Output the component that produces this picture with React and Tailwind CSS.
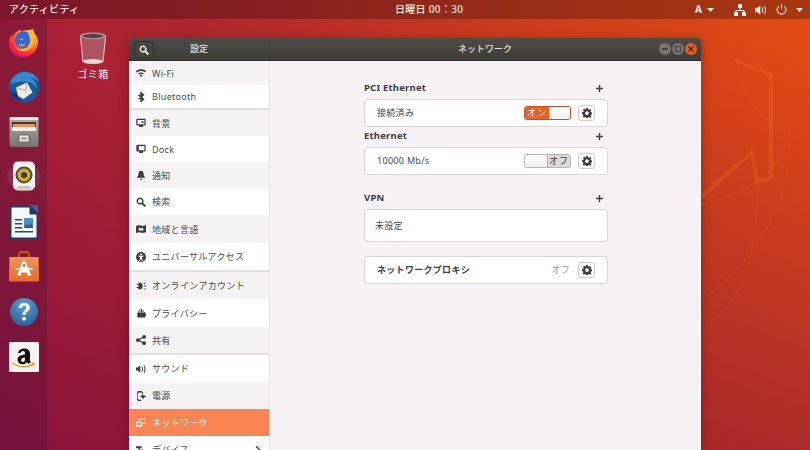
import React from "react";

const F = { fontFamily: '"Noto Sans","Noto Sans CJK JP",sans-serif' };

function Gear() {
  return (
    <svg width="10" height="10" viewBox="0 0 16 16" fill="#3d3d3d">
      <path fillRule="evenodd" d="M6.6 0h2.8l.4 2.2 1.3.6 1.9-1.3 2 2-1.3 1.9.6 1.3 2.2.4v2.8l-2.2.4-.6 1.3 1.3 1.9-2 2-1.9-1.3-1.3.6-.4 2.2H6.6l-.4-2.2-1.3-.6-1.9 1.3-2-2 1.3-1.9-.6-1.3L0 9.4V6.6l2.2-.4.6-1.3L1.500 3l2-2 1.900 1.300 1.300-.6zM8 5a3 3 0 100 6 3 3 0 000-6z" />
    </svg>
  );
}

function GearBtn({ tint }) {
  return (
    <div className={`w-[17px] h-[16px] rounded-[3px] border flex items-center justify-center bg-[#fbfafa] ${tint ? "border-[#edc9b5]" : "border-[#cfcbc8]"}`}>
      <Gear />
    </div>
  );
}

function Plus() {
  return (
    <svg width="7" height="7" viewBox="0 0 7 7" fill="#3d3d3d"><path d="M2.800 0h1.400v2.800H7v1.400H4.200V7H2.800V4.200H0V2.800h2.800z" /></svg>
  );
}

function SectionHead({ title, cls }) {
  return (
    <div className={`flex items-center justify-between pr-[5px] ${cls}`}>
      <span className="text-[9.5px] font-bold text-[#3d3d3d] leading-[12px] tracking-[0.2px]">{title}</span>
      <Plus />
    </div>
  );
}

function Row({ cls, children }) {
  return (
    <div className={`rounded-[3px] border border-[#dcd7d6] bg-white flex items-center ${cls}`}>{children}</div>
  );
}

function SideIcon({ name, color = "#3d3d3d" }) {
  const p = { width: 10, height: 10, viewBox: "0 0 16 16", fill: color };
  switch (name) {
    case "wifi":
      return <svg {...p}><path d="M0 5C4 1 12 1 16 5l-1.800 2C10.500 4 5.500 4 1.800 7z" /><path d="M3.500 8.500c2.700-2 6.300-2 9 0L11 10.200c-1.800-1.200-4.200-1.200-6 0z" /><path d="M6 11.500c1.200-.7 2.800-.7 4 0L8 15z" /></svg>;
    case "bt":
      return <svg {...p} fill="none" stroke={color} strokeWidth="2.400"><path d="M4 4.500l8 7-4 3.500V1l4 3.500-8 7" /></svg>;
    case "bg":
      return <svg {...p}><path fillRule="evenodd" d="M2 1h12a1.500 1.500 0 011.500 1.500v8A1.500 1.500 0 0114 12h-3v2.500H5V12H2a1.500 1.500 0 01-1.500-1.500v-8A1.500 1.500 0 012 1zm.500 2v7h11V3zM9 5h3v3H9z" /></svg>;
    case "dock":
      return <svg {...p}><path fillRule="evenodd" d="M2 1h12a1.500 1.500 0 011.500 1.500v8A1.500 1.500 0 0114 12h-3v2.500H5V12H2a1.500 1.500 0 01-1.500-1.500v-8A1.500 1.500 0 012 1zm2.500 2v7h9V3z" /></svg>;
    case "bell":
      return <svg {...p}><path d="M8 1c2.500 0 4 2 4 4.500 0 3 1 4.500 2.500 6v1h-13v-1C3 10 4 8.500 4 5.500 4 3 5.500 1 8 1zM6 14h4a2 2 0 01-4 0z" /></svg>;
    case "search":
      return <svg {...p} fill="none" stroke={color} strokeWidth="2.400"><circle cx="6.500" cy="6.500" r="4.500" /><path d="M10 10l5 5" strokeWidth="3" /></svg>;
    case "region":
      return <svg {...p}><path fillRule="evenodd" d="M0 3l5-1.500L11 3l5-1.500V13l-5 1.500L5 13l-5 1.500zM5 5l2 2 3-1 2 2-1 3-3-1-2 1-2-3z" /></svg>;
    case "access":
      return <svg {...p}><path fillRule="evenodd" d="M8 0a8 8 0 110 16A8 8 0 018 0zm0 2.500a1.500 1.500 0 100 3 1.500 1.500 0 000-3zM3.500 5.500v1.300L6.500 8v2L5 14l1.300.4L8 10.500l1.700 3.900L11 14l-1.500-4V8l3-1.200V5.500L8 6.500z" /></svg>;
    case "online":
      return <svg {...p}><path d="M4 2l5 1.500c2 .8 2 8.200 0 9L4 14V11H1V9.500h3v-3H1V5h3z" /><path d="M12 4l3-2 .6 1-3 2zM12.500 7.300h3.500v1.400h-3.500zM12 12l3 2 .6-1-3-2z" /></svg>;
    case "privacy":
      return <svg {...p}><path d="M2 8h1V5h1.500v3h1V2H7v6h1V1h1.500v7h1V3H12v5l2-1.500 1.500 1V13a2 2 0 01-2 2h-10A1.500 1.500 0 012 13.500z" /></svg>;
    case "share":
      return <svg {...p}><circle cx="3" cy="8" r="3" /><circle cx="13" cy="3" r="3" /><circle cx="13" cy="13" r="3" /><path d="M3 7L12.500 2l.7 1.500L4 9z" /><path d="M3 9l9.500 5 .7-1.500L4 7z" /></svg>;
    case "sound":
      return <svg {...p}><path d="M0 5.500h2.500L7 2v12l-4.500-3.500H0z" /><path d="M9 4.500l1.300-.7c1.500 2.700 1.500 5.700 0 8.400L9 11.500c1.100-2.300 1.100-4.700 0-7z" /><path d="M12.300 2.500l1.300-.7c2.200 4 2.200 8.400 0 12.400l-1.300-.7c1.800-3.500 1.800-7.500 0-11z" /></svg>;
    case "power":
      return <svg {...p}><path fillRule="evenodd" d="M5 0h4l1 2h1.500v2H9V2.200H5L3.200 3.500v9L5 14h3v2H4a2 2 0 01-2-2V2a2 2 0 012-2z" /><path d="M10 5h1.500v2H14l1.500 1.500v1H14l-2 3h-1L9 10l-2-.5v-1L9 7z" /></svg>;
    case "network":
      return <svg {...p}><path fillRule="evenodd" d="M6 1h8.500A1.500 1.500 0 0116 2.500v5A1.500 1.500 0 0114.500 9H11V7.500h3.500v-5H6V5H4.500V2.500A1.500 1.500 0 016 1zM1.500 6H8.500A1.500 1.500 0 0110 7.500v5A1.500 1.500 0 018.500 14h-7A1.500 1.500 0 010 12.500v-5A1.500 1.500 0 011.500 6zm.500 2v3h6V8z" /></svg>;
    case "device":
      return <svg {...p}><path d="M0 2h9v3H6v2h5v3H8v4H2v-4h2V5H0z" /><circle cx="13" cy="11" r="2.500" /></svg>;
    default:
      return null;
  }
}

function Item({ icon, label, h, alt, active, last }) {
  const bg = active ? "bg-[#fb8454]" : alt ? "bg-[#f5f3f3]" : "bg-white";
  const txt = active ? "text-white" : "text-[#4a4a4a]";
  return (
    <div className={`${h} ${bg} flex items-center shrink-0 pl-[4px] pr-[8px]`}>
      <span className="w-[16px] flex justify-center"><SideIcon name={icon} color={active ? "#ffffff" : "#3d3d3d"} /></span>
      <span className={`ml-[3px] text-[9px] leading-none tracking-[0.3px] flex-1 ${txt}`}>{label}</span>
      {last && (
        <svg width="6" height="8" viewBox="0 0 6 8" fill="none" stroke="#3d3d3d" strokeWidth="1.300"><path d="M1 0.500l4 3.500-4 3.500" /></svg>
      )}
    </div>
  );
}

const Sep = () => <div className="h-[2px] shrink-0 bg-[#e3e0df]" />;

function Toggle({ on }) {
  if (on) {
    return (
      <div className="w-[47px] h-[14px] rounded-[3px] border border-[#b8532a] bg-[#f1f0ef] flex overflow-hidden">
        <div className="w-[24px] bg-[#ed5f26] text-white text-[9px] leading-[12px] text-center tracking-[1px]">オン</div>
        <div className="flex-1 bg-gradient-to-b from-white to-[#f1efee]" />
      </div>
    );
  }
  return (
    <div className="w-[47px] h-[14px] rounded-[3px] border border-[#b9b5b2] bg-[#dcdad8] flex overflow-hidden">
      <div className="w-[23px] bg-gradient-to-b from-white to-[#f1efee] border-r border-[#b9b5b2]" />
      <div className="flex-1 text-[#3d3d3d] text-[9px] leading-[12px] text-center tracking-[1px]">オフ</div>
    </div>
  );
}

function DockIcon({ children }) {
  return <div className="h-[44.900px] flex items-center justify-center shrink-0">{children}</div>;
}

const Firefox = () => (
  <svg width="31" height="31" viewBox="0 0 32 32">
    <defs>
      <radialGradient id="ff1" cx="70%" cy="20%" r="90%"><stop offset="0" stopColor="#ffdf3d" /><stop offset=".45" stopColor="#ff8a1f" /><stop offset=".8" stopColor="#f5243f" /><stop offset="1" stopColor="#d91a7a" /></radialGradient>
    </defs>
    <path d="M26 2c1 2 .8 3.500 1.200 4.300C30 9.500 31.500 13 31 17c-.8 8-7.300 14-15 14C7.500 31 1 24.500 1 16.500 1 13 2 9.500 3.500 7.500 4 9 4.500 9.500 5 10c1.500-3.500 4.500-6.500 9-7.500-1 1-1.500 2-1.500 2.500C16 3 23 3.500 26 2z" fill="url(#ff1)" />
    <circle cx="16" cy="13.500" r="9" fill="#3468d6" />
    <path d="M11 17c2 1.300 5 1.300 7-.2-.5 2.500-3 3.700-5 3.200-1-.3-1.700-1.500-2-3z" fill="#ff9a1f" />
    <path d="M12.500 12.500c1.500-.6 3.500-.4 4 .8-1.300-.2-2.700.2-4 .4z" fill="#ff9a1f" />
    <path d="M21 3c4 3 7 8 5.500 14-1 4-5.500 8-10.500 8-3.500 0-7-1.800-8.500-5.500 3 3.500 8.500 4.500 12 1.500 3.500-3 4-7.500 2.500-11C21.500 8 20.500 6 21 3z" fill="#ffb81f" />
  </svg>
);

const Thunderbird = () => (
  <svg width="32" height="32" viewBox="0 0 32 32">
    <circle cx="16" cy="16" r="15.500" fill="#1c5a9c" />
    <path d="M2 13C4 6 10 1 17 1c6 0 12 3.500 14 10-3-3-6-4.500-9-4.500 4 2 6.500 6 7 11-3-5-8-7.500-14-7-5 .4-9 1-13 2.500z" fill="#3a8ad0" />
    <path d="M8 16.500l11-5 5.500 10-9 6.500-5.500-3z" fill="#eeece8" />
    <path d="M8 16.500l9.500 3 1.500-8" fill="none" stroke="#aaa7a0" strokeWidth="1" />
    <path d="M1 18c1.500 7 7.500 12.500 15 13-4-2.500-6.500-5.500-7.500-9-3.500 0-5.500-1.500-7.500-4z" fill="#123a6c" />
  </svg>
);

const Files = () => (
  <svg width="30" height="32" viewBox="0 0 30 32">
    <defs><linearGradient id="fl" x1="0" y1="0" x2="0" y2="1"><stop offset="0" stopColor="#b3b0ac" /><stop offset="1" stopColor="#76736f" /></linearGradient></defs>
    <rect x="0.500" y="1" width="29" height="30" rx="2" fill="url(#fl)" />
    <rect x="0.500" y="1" width="29" height="3" rx="1.500" fill="#efedea" />
    <rect x="3" y="6" width="24" height="9" fill="#3c3936" />
    <rect x="4" y="8" width="22" height="4" fill="#ef9257" />
    <rect x="3" y="11" width="24" height="4" fill="#f4f2ee" />
    <rect x="10" y="19" width="10" height="7" rx="1" fill="#e7e5e1" stroke="#5f5c58" strokeWidth="0.800" />
    <rect x="12.500" y="21.500" width="5" height="2" fill="#8e8b87" />
  </svg>
);

const Rhythmbox = () => (
  <svg width="36" height="32" viewBox="0 0 36 32">
    <ellipse cx="18" cy="16" rx="17" ry="13" fill="#8f6a96" opacity=".25" />
    <rect x="7" y="0.500" width="22" height="29" rx="5" fill="#f4f3ef" />
    <circle cx="18" cy="14" r="8.500" fill="#4a4a42" />
    <circle cx="18" cy="14" r="6.500" fill="#d3ad1c" />
    <circle cx="18" cy="14" r="3" fill="#3a392f" />
    <rect x="11" y="25" width="14" height="3.500" rx="1.500" fill="#c8c7c2" />
  </svg>
);

const Writer = () => (
  <svg width="28" height="34" viewBox="0 0 28 34">
    <path d="M0 1h20l8 8v25H0z" fill="#103f6e" />
    <path d="M1.500 2.500h18v7h7V32.500H1.500z" fill="#f5f8fb" />
    <path d="M20 0l8 0 0 8z" fill="#2a6aa8" />
    <rect x="5" y="14" width="7" height="1.500" fill="#16507f" /><rect x="5" y="18" width="7" height="1.500" fill="#16507f" /><rect x="5" y="22" width="7" height="1.500" fill="#16507f" /><rect x="5" y="26" width="18" height="1.500" fill="#16507f" />
    <rect x="14" y="13" width="9" height="10" fill="#4a90c7" />
    <path d="M14 23l3-4 2 2 2-3 2 5z" fill="#2b5d8a" />
  </svg>
);

const Store = () => (
  <svg width="30" height="31" viewBox="0 0 30 31">
    <defs><linearGradient id="st" x1="0" y1="0" x2="0" y2="1"><stop offset="0" stopColor="#f69356" /><stop offset="1" stopColor="#ea6a2a" /></linearGradient></defs>
    <path d="M10 7V4a3 3 0 013-3h4a3 3 0 013 3v3" fill="none" stroke="#c9521c" strokeWidth="1.800" />
    <path d="M0.500 6h29L30 30.500H0z" fill="url(#st)" />
    <path d="M13.500 10h3l6 15h-3.500l-1.200-3.500h-5.600L11.500 25H8z" fill="#fff" />
    <rect x="6" y="17" width="18" height="1.500" fill="#fff" />
    <rect x="14" y="13" width="2" height="3" fill="#ea6a2a" />
  </svg>
);

const Help = () => (
  <svg width="28" height="28" viewBox="0 0 28 28">
    <defs><radialGradient id="hp" cx="50%" cy="25%" r="85%"><stop offset="0" stopColor="#5aa1d8" /><stop offset="1" stopColor="#22598f" /></radialGradient></defs>
    <circle cx="14" cy="14" r="14" fill="url(#hp)" />
    <path d="M8.500 10c0-3 2.500-5 5.700-5 3.300 0 5.500 2 5.500 4.800 0 3.800-4.200 3.800-4.200 7.200h-3c0-4.800 4-4.700 4-7.200 0-1.200-1-2-2.300-2-1.500 0-2.600 1-2.700 2.400z" fill="#fff" />
    <rect x="12.300" y="19" width="3.400" height="3.400" rx="1" fill="#fff" />
  </svg>
);

const Amazon = () => (
  <svg width="30" height="30" viewBox="0 0 30 30">
    <rect width="30" height="30" rx="1.500" fill="#f4f3f1" />
    <path fillRule="evenodd" d="M9 11c.5-3 3-4.500 6-4.500 3.500 0 6 1.500 6 5V18c0 1 .5 1.500 1 2l-2.500 2c-.7-.5-1.200-1.200-1.500-2-1 1.500-2.500 2.300-4.500 2.300-3 0-5-1.800-5-4.500 0-3.500 3-5 7.500-5.300v-1c0-1.500-.5-2.500-2-2.500-1.300 0-2 .7-2.300 2zm7 4.500c-2.500.2-3.800 1-3.800 2.500 0 1.200.7 2 1.800 2 1.300 0 2-1.300 2-3z" fill="#111" />
    <path d="M3 21c6 4 14 5 21 1.500" fill="none" stroke="#f59a1f" strokeWidth="1.500" />
    <path d="M22 21l4-.5-.8 3.500z" fill="#f59a1f" />
  </svg>
);

const Trash = () => (
  <svg width="28" height="33" viewBox="0 0 28 33">
    <ellipse cx="14" cy="4" rx="13" ry="3.500" fill="#a99fa0" />
    <ellipse cx="14" cy="4" rx="10.500" ry="2.200" fill="#5a4148" />
    <path d="M1.500 5l2.500 25c1 3 19 3 20 0L26.500 5C22 8 6 8 1.500 5z" fill="#b2606c" opacity=".8" />
    <ellipse cx="14" cy="29.500" rx="10" ry="2.500" fill="#e0dad8" />
    <path d="M1.500 5l2.500 25" stroke="#e0d5d5" strokeWidth="1" fill="none" />
    <path d="M26.500 5l-2.500 25" stroke="#e0d5d5" strokeWidth="1" fill="none" />
  </svg>
);

export default function App() {
  return (
    <div
      style={F}
      className="relative w-[810px] h-[450px] overflow-hidden flex flex-col bg-[linear-gradient(100deg,#a81d38_0%,#b42a2c_30%,#c93a1e_55%,#e84f12_100%)]"
    >
      <div className="absolute inset-0 bg-[linear-gradient(to_bottom,rgba(100,0,70,0)_8%,rgba(100,0,70,0.45)_100%)]" />
      <svg className="absolute inset-0" width="810" height="450" viewBox="0 0 810 450" fill="none">
        <path d="M700 198L752 152L757 182L771 178L771 75L735 60" stroke="#ee6a22" strokeOpacity=".3" strokeWidth="4" />
        <path d="M700 205C740 195 780 180 790 130M737 62C745 110 770 125 790 130M790 130C795 200 750 270 700 300M757 180C760 260 735 310 705 325" stroke="#f07030" strokeOpacity=".15" strokeWidth="1" />
      </svg>
      <div className="relative h-[19px] shrink-0 bg-black/25 flex items-center text-white">
        <span className="ml-[9px] text-[10px] font-medium tracking-[0.3px] text-[#f4e9e6]">アクティビティ</span>
        <span className="absolute left-[395px] text-[10px] font-medium tracking-[0.3px] text-[#f4e9e6]">日曜日 00：30</span>
        <div className="ml-auto flex items-center mr-[7px]">
          <span className="text-[10px] font-bold text-[#eef0f8]">A</span>
          <svg className="ml-[5px]" width="7" height="4" viewBox="0 0 7 4" fill="#f4e9e6"><path d="M0 0h7L3.500 4z" /></svg>
          <svg className="ml-[20px]" width="12" height="12" viewBox="0 0 12 12" fill="#f4e9e6"><rect x="4" y="0" width="4" height="4" /><rect x="0" y="8" width="4" height="4" /><rect x="8" y="8" width="4" height="4" /><path d="M5.500 4h1v2H10.500v2h-1V7h-7v1h-1V6h4z" /></svg>
          <svg className="ml-[9px]" width="12" height="10" viewBox="0 0 16 14" fill="#f4e9e6"><path d="M0 4h3l4-3.500v13L3 10H0z" /><path d="M9 3.500l1-.8c1.600 2.700 1.600 5.900 0 8.600l-1-.8c1.100-2.300 1.100-4.700 0-7zM12 1.500l1-.8c2.600 4 2.600 8.600 0 12.600l-1-.8c2.200-3.500 2.200-7.500 0-11z" /></svg>
          <svg className="ml-[9px]" width="11" height="11" viewBox="0 0 12 12" fill="none" stroke="#f4e9e6" strokeWidth="1.300"><path d="M3.200 2.400a4.800 4.800 0 105.600 0" /><path d="M6 0v5.500" /></svg>
          <svg className="ml-[9px]" width="7" height="4" viewBox="0 0 7 4" fill="#f4e9e6"><path d="M0 0h7L3.500 4z" /></svg>
        </div>
      </div>

      <div className="relative flex-1 flex min-h-0">
        <div className="w-[47px] shrink-0 bg-[rgba(50,20,60,0.25)] flex flex-col pt-[1px]">
          <DockIcon><Firefox /></DockIcon>
          <DockIcon><Thunderbird /></DockIcon>
          <DockIcon><Files /></DockIcon>
          <DockIcon><Rhythmbox /></DockIcon>
          <DockIcon><Writer /></DockIcon>
          <DockIcon><Store /></DockIcon>
          <DockIcon><Help /></DockIcon>
          <DockIcon><Amazon /></DockIcon>
        </div>

        <div className="absolute left-[70px] top-[13px] w-[46px] flex flex-col items-center">
          <Trash />
          <span className="mt-[3px] text-[10px] leading-[12px] text-white tracking-[0.5px]">ゴミ箱</span>
        </div>

        <div className="absolute left-[129px] top-[19px] w-[572px] h-[420px] flex flex-col shadow-[0_2px_10px_rgba(0,0,0,0.3)]">
          <div className="h-[23px] shrink-0 rounded-t-[4px] flex bg-gradient-to-b from-[#4d4c46] to-[#3d3c37] border-b border-[#2f2e2a] text-[#e4e2dc]">
            <div className="w-[140px] relative flex items-center justify-center border-r border-[#45443f]">
              <div className="absolute left-[5px] top-[3px] w-[20px] h-[17px] rounded-[3px] border border-[#33322e] bg-[#45443f] flex items-center justify-center">
                <SideIcon name="search" color="#efefec" />
              </div>
              <span className="text-[9px] font-medium pl-[1px] tracking-[0.1px]">設定</span>
            </div>
            <div className="flex-1 relative flex items-center justify-center">
              <span className="text-[9px] font-medium">ネットワーク</span>
              <div className="absolute right-[4px] top-[5px] flex gap-[1px]">
                <div className="w-[12px] h-[12px] rounded-full bg-[#75746f] flex items-center justify-center"><div className="w-[6px] h-[2px] bg-[#44433f]" /></div>
                <div className="w-[12px] h-[12px] rounded-full bg-[#75746f] flex items-center justify-center"><div className="w-[6px] h-[6px] border border-[#44433f]" /></div>
                <div className="w-[12px] h-[12px] rounded-full bg-[#ee5a25] flex items-center justify-center text-[#4a2a1a]">
                  <svg width="6" height="6" viewBox="0 0 6 6" stroke="#4a2a1a" strokeWidth="1.300"><path d="M0.500 0.500l5 5M5.500 0.500l-5 5" /></svg>
                </div>
              </div>
            </div>
          </div>

          <div className="flex-1 flex min-h-0">
            <div className="w-[141px] shrink-0 flex flex-col border-r border-[#e8e3e6] overflow-hidden bg-white">
              <Item icon="wifi" label="Wi-Fi" h="h-[24px]" alt />
              <Item icon="bt" label="Bluetooth" h="h-[23px]" />
              <Sep />
              <Item icon="bg" label="背景" h="h-[26px]" alt />
              <Item icon="dock" label="Dock" h="h-[26px]" />
              <Item icon="bell" label="通知" h="h-[26px]" alt />
              <Item icon="search" label="検索" h="h-[27px]" />
              <Item icon="region" label="地域と言語" h="h-[28px]" alt />
              <Item icon="access" label="ユニバーサルアクセス" h="h-[27px]" />
              <Sep />
              <Item icon="online" label="オンラインアカウント" h="h-[27px]" alt />
              <Item icon="privacy" label="プライバシー" h="h-[28px]" />
              <Item icon="share" label="共有" h="h-[26px]" alt />
              <Sep />
              <Item icon="sound" label="サウンド" h="h-[27px]" />
              <Item icon="power" label="電源" h="h-[27px]" alt />
              <Item icon="network" label="ネットワーク" h="h-[27px]" active />
              <Item icon="device" label="デバイス" h="h-[27px]" last />
            </div>

            <div className="flex-1 bg-[#f6f2f6] pl-[94px] pt-[21px]">
              <div className="w-[244px] flex flex-col text-[#4a4a4a] text-[9px]">
                <SectionHead title="PCI Ethernet" cls="h-[12px]" />
                <Row cls="h-[28px] mt-[5px] pl-[12px] pr-[12px]">
                  <span className="flex-1 tracking-[0.3px]">接続済み</span>
                  <Toggle on />
                  <div className="ml-[7px]"><GearBtn tint /></div>
                </Row>
                <SectionHead title="Ethernet" cls="h-[12px] mt-[3px]" />
                <Row cls="h-[28px] mt-[5px] pl-[12px] pr-[12px]">
                  <span className="flex-1 tracking-[0.3px]">10000 Mb/s</span>
                  <Toggle />
                  <div className="ml-[7px]"><GearBtn /></div>
                </Row>
                <SectionHead title="VPN" cls="h-[12px] mt-[17px]" />
                <Row cls="h-[33px] mt-[5px] pl-[10px]">
                  <span className="tracking-[0.3px]">未設定</span>
                </Row>
                <Row cls="h-[28px] mt-[14px] pl-[12px] pr-[12px]">
                  <span className="flex-1 font-bold text-[#3d3d3d] tracking-[0.3px]">ネットワークプロキシ</span>
                  <span className="text-[#9a9a9a] tracking-[0.3px]">オフ</span>
                  <div className="ml-[8px]"><GearBtn /></div>
                </Row>
              </div>
            </div>
          </div>
        </div>
      </div>
    </div>
  );
}
